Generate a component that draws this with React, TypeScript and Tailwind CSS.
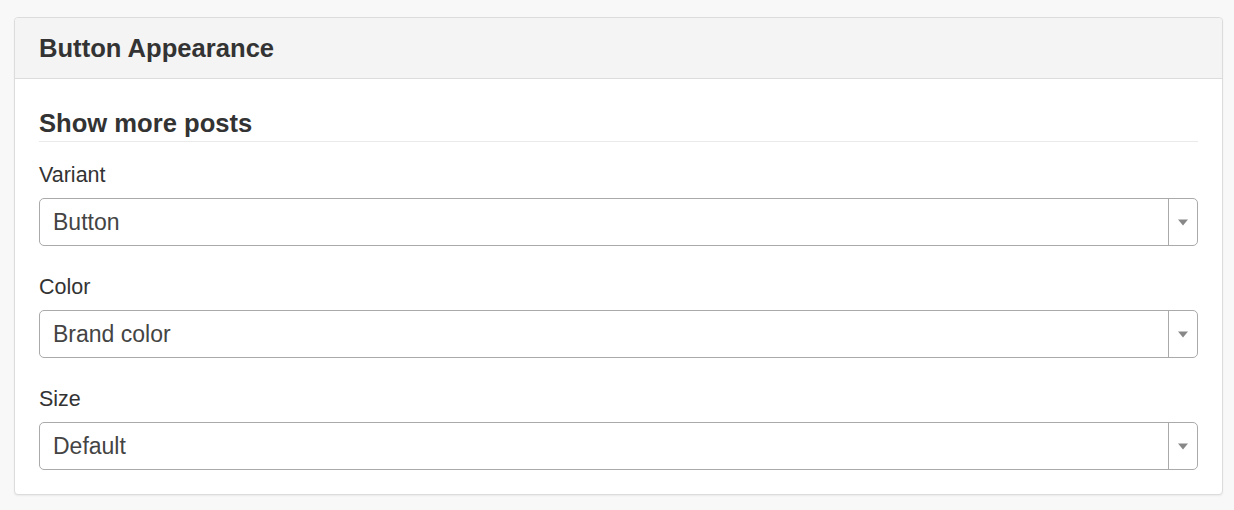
import React from "react";

function SelectField({ label, value }: { label: string; value: string }) {
  return (
    <div className="flex flex-col">
      <div className="text-[21.5px] leading-[22px] text-[#333] mb-[12px]">{label}</div>
      <div className="flex h-[48px] items-stretch rounded-[5px] border border-[#aaa] bg-white">
        <div className="flex flex-1 items-center pl-[13px] text-[23px] text-[#444]">{value}</div>
        <div className="flex w-[29px] items-center justify-center border-l border-[#aaa]">
          <svg width="10" height="7" viewBox="0 0 10 7">
            <path d="M0 0.5 L10 0.5 L5 6.5 Z" fill="#888" />
          </svg>
        </div>
      </div>
    </div>
  );
}

export default function App() {
  return (
    <div
      className="min-h-[510px] w-full bg-[#f8f8f8] pt-[17px]"
      style={{ fontFamily: '"Liberation Sans", Arial, Helvetica, sans-serif' }}
    >
      <div className="ml-[14px] w-[1209px] rounded-[4px] border border-[#dcdcdc] bg-white shadow-[0_1px_2px_rgba(0,0,0,0.06)]">
        <div className="flex h-[61px] items-center rounded-t-[4px] border-b border-[#dcdcdc] bg-[#f4f4f4] px-6">
          <div className="text-[25.6px] leading-[30px] font-bold text-[#333]">Button Appearance</div>
        </div>
        <div className="px-6 pt-[29px] pb-[24px]">
          <div className="border-b border-[#eaeaea] pb-[3px] text-[25.6px] leading-[30px] font-bold text-[#333]">
            Show more posts
          </div>
          <div className="mt-[22px] flex flex-col gap-[30px]">
            <SelectField label="Variant" value="Button" />
            <SelectField label="Color" value="Brand color" />
            <SelectField label="Size" value="Default" />
          </div>
        </div>
      </div>
    </div>
  );
}
